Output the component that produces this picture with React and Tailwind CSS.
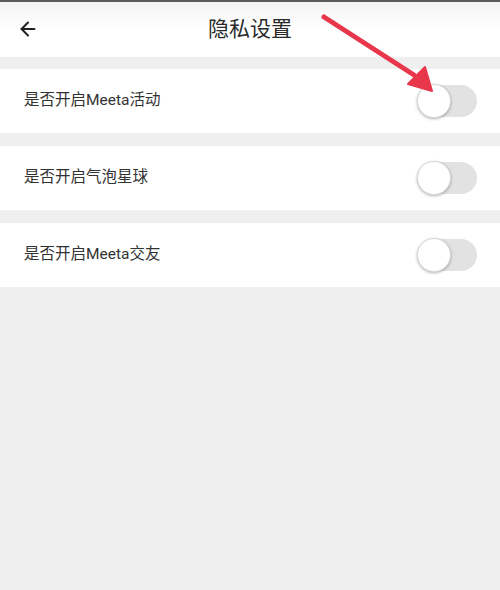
import { ArrowLeft } from "lucide-react";

const items = ["是否开启Meeta活动", "是否开启气泡星球", "是否开启Meeta交友"];

export default function App() {
  return (
    <div
      className="relative w-[500px] h-[590px] bg-[#efefef] overflow-hidden"
      style={{ fontFamily: "Roboto, 'Noto Sans CJK SC', sans-serif" }}
    >
      <div className="h-[2px] bg-[#5a5a5a]" />

      {/* header */}
      <div className="relative h-[55px] bg-gradient-to-b from-[#f4f4f4] via-white to-white flex items-center justify-center">
        <button className="absolute left-[17px] top-[16px] text-[#222]">
          <ArrowLeft size={22} strokeWidth={2.2} />
        </button>
        <h1 className="text-[21px] text-[#2a2a2a] leading-none">隐私设置</h1>
      </div>

      <div className="flex flex-col gap-[13px] pt-[12px]">
        {items.map((t) => (
          <Row key={t} label={t} />
        ))}
      </div>

      {/* annotation arrow */}
      <svg
        className="absolute left-0 top-0 pointer-events-none"
        width="500"
        height="120"
        viewBox="0 0 500 120"
      >
        <line x1="324" y1="17" x2="414" y2="75" stroke="#e8374b" strokeWidth="5" strokeLinecap="round" />
        <polygon points="432,91 408,84 425,67" fill="#e8374b" stroke="#e8374b" strokeWidth="2" strokeLinejoin="round" />
      </svg>
    </div>
  );
}

function Row({ label }) {
  return (
    <div className="h-[64px] bg-white flex items-center justify-between pl-[24px] pr-[23px]">
      <span className="text-[15.5px] text-[#333]">{label}</span>
      <Toggle />
    </div>
  );
}

function Toggle() {
  return (
    <div className="relative w-[60px] h-[34px]">
      <div className="absolute left-[2px] right-0 top-[1px] bottom-[1px] rounded-full bg-[#e2e2e2]" />
      <div className="absolute left-0 top-0 w-[34px] h-[34px] rounded-full bg-white border border-[#d8d8d8] shadow-[0_1px_3px_rgba(0,0,0,0.3)]" />
    </div>
  );
}
